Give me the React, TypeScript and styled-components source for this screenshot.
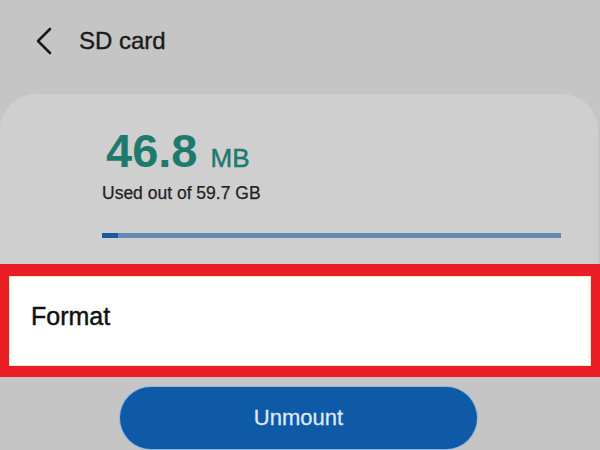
import React from 'react'
import styled, { createGlobalStyle } from 'styled-components'

const GlobalStyle = createGlobalStyle`
  html, body {
    margin: 0;
    padding: 0;
    background: #c5c5c5;
    font-family: 'Liberation Sans', Arial, sans-serif;
  }
  #root {
    width: 600px;
    height: 450px;
    overflow: hidden;
  }
`

const Screen = styled.div`
  width: 600px;
  height: 450px;
  display: flex;
  flex-direction: column;
  background: #c5c5c5;
`

const Header = styled.div`
  height: 82px;
  padding-left: 36px;
  display: flex;
  align-items: center;
  gap: 27px;
  margin-bottom: 12px;
`

const BackButton = styled.svg`
  width: 16px;
  height: 28px;
  display: block;
`

const Title = styled.div`
  font-size: 24px;
  line-height: 1;
  color: #1b1b1b;
  -webkit-text-stroke: 0.4px #1b1b1b;
`

const Card = styled.div`
  margin-right: 2px;
  height: 170px;
  box-sizing: border-box;
  padding: 33px 0 0 102px;
  background: #cfcfcf;
  border-radius: 36px 36px 0 0;
  display: flex;
  flex-direction: column;
`

const UsedRow = styled.div`
  display: flex;
  align-items: baseline;
  gap: 13px;
  margin-left: 4px;
  color: #1e7a6c;
  line-height: 1;
`

const UsedValue = styled.span`
  font-size: 47px;
  font-weight: bold;
`

const UsedUnit = styled.span`
  font-size: 26px;
  -webkit-text-stroke: 0.5px #1e7a6c;
`

const Caption = styled.div`
  margin-top: 11px;
  font-size: 17.5px;
  line-height: 1;
  color: #222;
  -webkit-text-stroke: 0.25px #222;
`

const Track = styled.div`
  margin-top: 30px;
  width: 459px;
  height: 5px;
  background: #658ab1;
`

const Fill = styled.div`
  height: 100%;
  background: #1c58a0;
`

const FormatRow = styled.div`
  height: 90px;
  box-sizing: border-box;
  height: 113px;
  border-style: solid;
  border-color: #ec1c24;
  border-width: 12px 9px 11px 9px;
  background: #ffffff;
  box-shadow: inset 0 0 0 1px #d6f3cf;
  padding: 28px 0 0 22px;
`

const FormatLabel = styled.div`
  font-size: 25px;
  line-height: 1;
  color: #111;
  -webkit-text-stroke: 0.45px #111;
`

const UnmountButton = styled.button`
  margin: 10px 0 0 120px;
  width: 357px;
  height: 62px;
  border: none;
  border-radius: 31px;
  background: #0e5aa7;
  box-shadow: 0 0 0 1px #8db6df;
  color: #dde9f6;
  font-family: 'Liberation Sans', Arial, sans-serif;
  font-size: 22px;
  -webkit-text-stroke: 0.3px #dde9f6;
  display: flex;
  align-items: center;
  justify-content: center;
  padding: 0;
`

const App: React.FC = () => {
  const usedPercent = (46.8 / 1024 / 59.7) * 100
  return (
    <>
      <GlobalStyle />
      <Screen>
        <Header>
          <BackButton viewBox="0 0 16 28">
            <polyline points="14,2 2,14 14,26" fill="none" stroke="#1a1a1a" strokeWidth="2.6" strokeLinecap="round" strokeLinejoin="round" />
          </BackButton>
          <Title>SD card</Title>
        </Header>
        <Card>
          <UsedRow>
            <UsedValue>46.8</UsedValue>
            <UsedUnit>MB</UsedUnit>
          </UsedRow>
          <Caption>Used out of 59.7 GB</Caption>
          <Track>
            <Fill style={{ width: `${Math.max(usedPercent, 3.5)}%` }} />
          </Track>
        </Card>
        <FormatRow>
          <FormatLabel>Format</FormatLabel>
        </FormatRow>
        <UnmountButton>Unmount</UnmountButton>
      </Screen>
    </>
  )
}

export default App
